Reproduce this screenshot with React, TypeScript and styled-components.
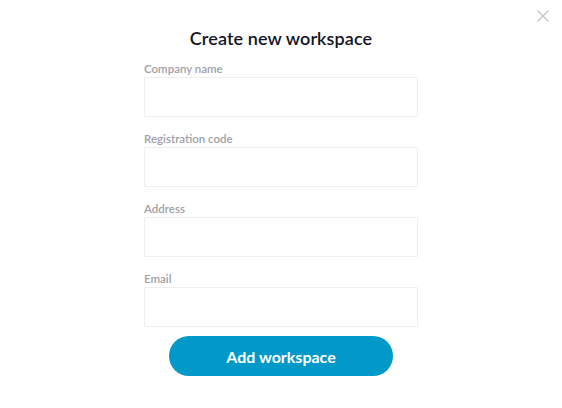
import React from "react";
import styled, { createGlobalStyle } from "styled-components";

const Global = createGlobalStyle`
  html, body { margin: 0; padding: 0; background: #ffffff; }
  body { font-family: Lato, "Noto Sans", sans-serif; }
  * { box-sizing: border-box; }
`;

const Page = styled.div`
  position: relative;
  width: 562px;
  height: 408px;
  background: #fff;
  display: flex;
  flex-direction: column;
  align-items: center;
`;

const Close = styled.button`
  position: absolute;
  top: 9px;
  right: 12px;
  width: 14px;
  height: 14px;
  padding: 0;
  border: none;
  background: none;
  cursor: pointer;
  display: flex;
`;

const Title = styled.h1`
  margin: 27px 0 0;
  font-size: 18px;
  font-weight: 600;
  color: #14141f;
  letter-spacing: 0.1px;
  line-height: 22px;
`;

const Form = styled.form`
  width: 274px;
  margin-top: 13px;
  display: flex;
  flex-direction: column;
  align-items: center;
`;

const Field = styled.label`
  width: 100%;
  display: flex;
  flex-direction: column;
  margin-bottom: 15px;
`;

const Label = styled.span`
  font-size: 11.5px;
  font-weight: 600;
  color: #a0a0a6;
  line-height: 14px;
  margin-bottom: 1px;
`;

const Input = styled.input`
  width: 100%;
  height: 40px;
  border: 1px solid #eeeeee;
  border-radius: 1px;
  outline: none;
  font: inherit;
  padding: 0 10px;
`;

const Button = styled.button`
  width: 224px;
  height: 40px;
  margin-top: -6px;
  border: none;
  border-radius: 20px;
  background: #0099c8;
  color: #ffffff;
  font-family: Lato, "Noto Sans", sans-serif;
  font-size: 16px;
  font-weight: 700;
  cursor: pointer;
`;

const fields = ["Company name", "Registration code", "Address", "Email"];

export default function App() {
  return (
    <>
      <Global />
      <Page>
        <Close aria-label="Close">
          <svg width="14" height="14" viewBox="0 0 14 14">
            <path d="M1.5 1.5 L12.5 12.5 M12.5 1.5 L1.5 12.5" stroke="#c2c2c8" strokeWidth="1.2" />
          </svg>
        </Close>
        <Title>Create new workspace</Title>
        <Form onSubmit={(e) => e.preventDefault()}>
          {fields.map((f) => (
            <Field key={f}>
              <Label>{f}</Label>
              <Input />
            </Field>
          ))}
          <Button type="submit">Add workspace</Button>
        </Form>
      </Page>
    </>
  );
}
